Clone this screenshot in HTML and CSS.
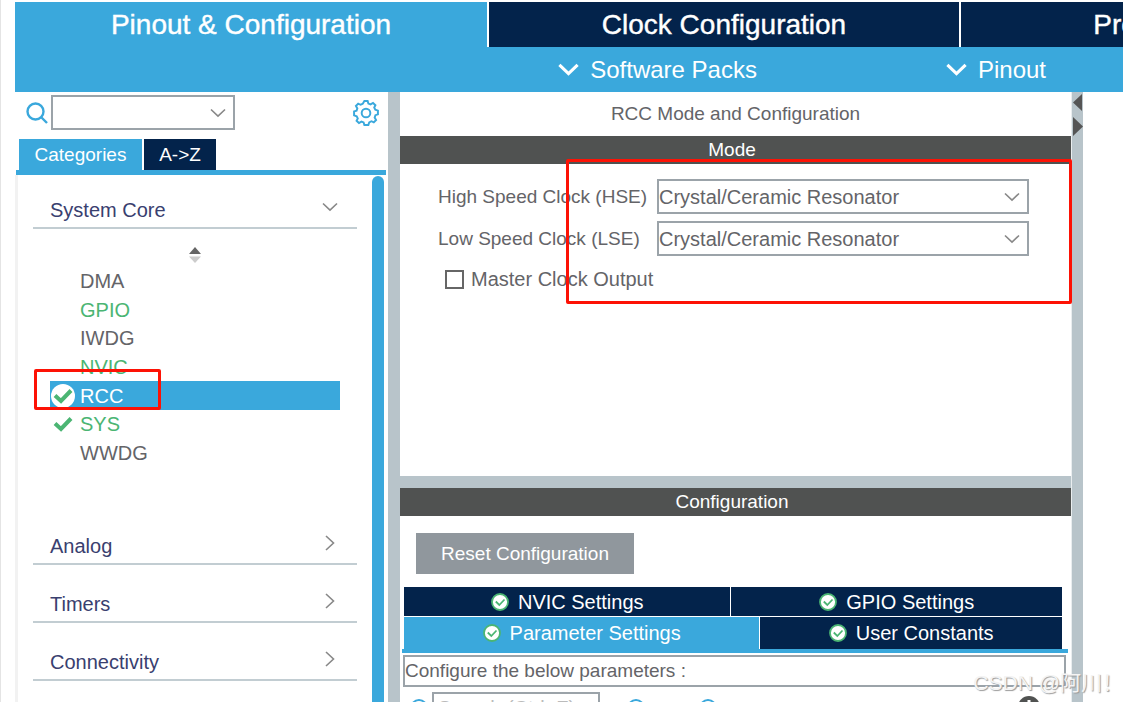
FILE: index.html
```
<!DOCTYPE html>
<html lang="en">
<head>
    <meta charset="UTF-8">
    <meta name="viewport" content="width=device-width, initial-scale=1.0">
    <title>RCC Mode and Configuration</title>
    <link rel="stylesheet" href="styles.css">
</head>
<body>

<!-- Shared icons -->
<svg class="defs" width="0" height="0" aria-hidden="true">
    <symbol id="down" viewBox="0 0 16 10"><path d="M1 1.500L8 8.200L15 1.500"/></symbol>
    <symbol id="right" viewBox="0 0 10 16"><path d="M1 1L8.500 8L1 15"/></symbol>
    <symbol id="tick" viewBox="0 0 20 16"><path d="M2 7.500L8 13L18 2.500"/></symbol>
    <symbol id="badge" viewBox="0 0 18 18">
        <circle cx="9" cy="9" r="8" fill="#fff" stroke="#4bb573" stroke-width="1.800"/>
        <path d="M4.800 8.500L8.300 12L13.500 6.500" fill="none" stroke="#4bb573" stroke-width="1.800"/>
    </symbol>
</svg>

<div class="app">
    <header>
        <nav class="main-tabs">
            <button class="active">Pinout &amp; Configuration</button>
            <button>Clock Configuration</button>
            <button>Project Manager</button>
        </nav>
        <div class="menu-bar">
            <button><svg class="menu-arrow"><use href="#down"/></svg>Software Packs</button>
            <button><svg class="menu-arrow"><use href="#down"/></svg>Pinout</button>
        </div>
    </header>

    <div class="workspace">
        <!-- Peripheral tree -->
        <aside class="sidebar">
            <div class="search-row">
                <svg class="search-icon" viewBox="0 0 22 22"><circle cx="9.500" cy="9.500" r="8"/><path d="M15 15L21 21"/></svg>
                <div class="combo">
                    <select aria-label="Search"><option></option></select>
                    <svg class="arrow"><use href="#down"/></svg>
                </div>
                <button class="gear" aria-label="Settings">
                    <svg viewBox="-12 -12 24 24">
                        <path d="M-1.500 -11H1.500L2.200 -8.700L4.200 -8L6.500 -9.300L8.700 -7.200L7.600 -5L8.600 -3L11 -2.200V1.200L8.700 2L8 4.200L9.300 6.500L7.200 8.700L5 7.600L3 8.600L2.200 11H-1.500L-2.200 8.700L-4.200 8L-6.500 9.300L-8.700 7.200L-7.600 5L-8.600 3L-11 2.200V-1.500L-8.700 -2.200L-8 -4.200L-9.300 -6.500L-7.200 -8.700L-5 -7.600L-3 -8.600Z"/>
                        <circle r="4"/>
                    </svg>
                </button>
            </div>
            <div class="side-tabs">
                <button class="active">Categories</button>
                <button>A-&gt;Z</button>
            </div>
            <div class="tree">
                <div class="tree-body">
                    <button class="group">System Core<svg class="arrow"><use href="#down"/></svg></button>
                    <svg class="sorter" viewBox="0 0 12 16"><path d="M0 7L6 0L12 7Z" fill="#666"/><path d="M0 9.500L6 16L12 9.500Z" fill="#ccc"/></svg>
                    <ul>
                        <li>DMA</li>
                        <li class="on">GPIO</li>
                        <li>IWDG</li>
                        <li class="on">NVIC</li>
                        <li class="selected"><span class="mark"><svg><use href="#tick"/></svg></span>RCC</li>
                        <li class="on"><span class="mark"><svg><use href="#tick"/></svg></span>SYS</li>
                        <li>WWDG</li>
                    </ul>
                    <button class="group">Analog<svg class="arrow-right"><use href="#right"/></svg></button>
                    <button class="group">Timers<svg class="arrow-right"><use href="#right"/></svg></button>
                    <button class="group">Connectivity<svg class="arrow-right"><use href="#right"/></svg></button>
                    <div class="highlight highlight-rcc"></div>
                </div>
                <div class="scrollbar"></div>
            </div>
        </aside>

        <div class="splitter"></div>

        <main>
            <h1>RCC Mode and Configuration</h1>
            <section class="mode">
                <h2>Mode</h2>
                <div class="field">
                    <label for="hse">High Speed Clock (HSE)</label>
                    <div class="combo">
                        <select id="hse"><option>Crystal/Ceramic Resonator</option></select>
                        <svg class="arrow"><use href="#down"/></svg>
                    </div>
                </div>
                <div class="field">
                    <label for="lse">Low Speed Clock (LSE)</label>
                    <div class="combo">
                        <select id="lse"><option>Crystal/Ceramic Resonator</option></select>
                        <svg class="arrow"><use href="#down"/></svg>
                    </div>
                </div>
                <label class="check"><input type="checkbox">Master Clock Output</label>
                <div class="highlight highlight-clocks"></div>
            </section>

            <section class="config">
                <h2>Configuration</h2>
                <button class="reset">Reset Configuration</button>
                <div class="config-tabs">
                    <div class="tab-row">
                        <button><svg class="badge"><use href="#badge"/></svg>NVIC Settings</button>
                        <button><svg class="badge"><use href="#badge"/></svg>GPIO Settings</button>
                    </div>
                    <div class="tab-row wide-first">
                        <button class="active"><svg class="badge"><use href="#badge"/></svg>Parameter Settings</button>
                        <button><svg class="badge"><use href="#badge"/></svg>User Constants</button>
                    </div>
                </div>
                <div class="params">
                    <p>Configure the below parameters :</p>
                    <div class="filter">
                        <svg class="ring" viewBox="0 0 20 20"><circle cx="10" cy="10" r="8"/></svg>
                        <input type="text" placeholder="Search (Ctrl+F)" aria-label="Search parameters">
                        <svg class="ring" viewBox="0 0 20 20"><circle cx="10" cy="10" r="8"/></svg>
                        <svg class="ring" viewBox="0 0 20 20"><circle cx="10" cy="10" r="8"/></svg>
                        <svg class="info" viewBox="0 0 22 22"><circle cx="11" cy="11" r="11" fill="#505251"/><path d="M11 4V7M11 9V17" stroke="#fff" stroke-width="3"/></svg>
                    </div>
                </div>
            </section>
        </main>

        <div class="splitter right">
            <svg viewBox="0 0 11 44"><path d="M10 2V19L1 10.500ZM1 25V44L11 34.500Z" fill="#555"/></svg>
        </div>
        <div class="canvas"></div>
    </div>
    <div class="watermark">CSDN @阿川！</div>
</div>

</body>
</html>
```
FILE: styles.css
```
/* General styles */
* {
    box-sizing: border-box;
}

body {
    margin: 0;
    background-color: #fff;
    color: #646468;
    font-family: "Liberation Sans", Arial, "Noto Sans CJK SC", sans-serif;
    font-size: 20px;
    line-height: 28px;
    overflow: hidden;
}

button, select, input {
    font: inherit;
    color: inherit;
    border: 0;
    border-radius: 0;
    padding: 0;
    margin: 0;
    background: none;
}

.defs {
    position: absolute;
}

.app {
    position: relative;
    display: flex;
    flex-direction: column;
    height: 100vh;
    padding: 2px 0 0 14px;
    border-left: 1px solid #e4e4e4;
    overflow: hidden;
}

/* Header */
.main-tabs {
    display: grid;
    grid-template-columns: repeat(3, 42.6%);
    background-color: #fff;
}

.main-tabs button {
    height: 45px;
    background-color: #03234b;
    border-left: 2px solid #fff;
    color: #fff;
    font-size: 28px;
    -webkit-text-stroke: 0.4px #fff;
}

.main-tabs .active {
    background-color: #3aa8dc;
    border-left: 0;
}

.menu-bar {
    display: flex;
    justify-content: flex-end;
    gap: 189px;
    height: 45px;
    padding-right: 77px;
    background-color: #3aa8dc;
}

.menu-bar button {
    display: flex;
    align-items: center;
    gap: 11px;
    color: #fff;
    font-size: 24px;
}

.menu-arrow {
    width: 21px;
    height: 13px;
    fill: none;
    stroke: #fff;
    stroke-width: 2.4px;
}

/* Panels */
.workspace {
    flex: 1;
    display: grid;
    grid-template-columns: 373fr 12px 672fr 11px 40fr;
    min-height: 0;
}

.splitter {
    background-color: #b8c4ca;
}

.splitter.right svg {
    display: block;
    width: 11px;
    height: 44px;
}

.arrow, .arrow-right {
    width: 16px;
    height: 10px;
    fill: none;
    stroke: #888;
    stroke-width: 1.6px;
}

.arrow-right {
    width: 10px;
    height: 16px;
}

.combo {
    position: relative;
    height: 35px;
    border: 2px solid #9ba3a9;
}

.combo select {
    width: 100%;
    height: 100%;
    appearance: none;
}

.combo .arrow {
    position: absolute;
    right: 7px;
    top: 11px;
    pointer-events: none;
}

/* Sidebar */
.sidebar {
    display: flex;
    flex-direction: column;
    min-height: 0;
}

.search-row {
    display: flex;
    align-items: center;
    height: 47px;
    padding: 0 9px 6px 11px;
}

.search-row .combo {
    width: 184px;
    margin-left: 3px;
}

.search-icon {
    width: 22px;
    height: 22px;
    fill: none;
    stroke: #3aa8dc;
    stroke-width: 2.4px;
}

.gear {
    display: flex;
    margin-left: auto;
}

.gear svg {
    width: 26px;
    height: 26px;
    fill: none;
    stroke: #3aa8dc;
    stroke-width: 1.8px;
}

.side-tabs {
    display: flex;
    gap: 2px;
    margin: 0 2px 0 1px;
    padding-left: 3px;
    border-bottom: 5px solid #3aa8dc;
    color: #fff;
}

.side-tabs button {
    width: 72px;
    height: 31px;
    background-color: #03234b;
    font-size: 19px;
}

.side-tabs .active {
    width: 123px;
    background-color: #3aa8dc;
}

.tree {
    flex: 1;
    display: flex;
    min-height: 0;
    padding-right: 4px;
    border-left: 3px solid #f2f2f2;
}

.tree-body {
    position: relative;
    flex: 1;
    padding: 0 15px;
    overflow: hidden;
}

.scrollbar {
    width: 12px;
    margin-top: 1px;
    border-radius: 6px 6px 0 0;
    background-color: #3aa8dc;
}

.group {
    display: flex;
    align-items: flex-end;
    justify-content: space-between;
    width: 100%;
    height: 58px;
    padding: 0 22px 3px 17px;
    border-bottom: 2px solid #c2cdd2;
    color: #39406f;
    text-align: left;
}

.group:first-child {
    height: 54px;
    padding-right: 19px;
}

.group .arrow {
    margin-bottom: 12px;
}

.group .arrow-right {
    margin-bottom: 9px;
}

.sorter {
    display: block;
    width: 12px;
    height: 16px;
    margin: 18px auto 4px;
}

.tree ul {
    display: grid;
    grid-template-rows: repeat(7, 1fr);
    height: 200px;
    margin: 0 17px 40px 17px;
    padding: 0;
    list-style: none;
}

.tree li {
    display: flex;
    align-items: center;
    padding-left: 30px;
}

.tree .on {
    color: #4bb573;
}

.tree .selected {
    background-color: #3aa8dc;
    color: #fff;
}

.mark {
    display: flex;
    align-items: center;
    justify-content: center;
    width: 24px;
    height: 24px;
    margin-left: -29px;
    margin-right: 5px;
    border-radius: 50%;
    background-color: #fff;
}

.mark svg {
    width: 20px;
    height: 16px;
    fill: none;
    stroke: #4bb573;
    stroke-width: 4px;
}

/* Red marker frames */
.highlight {
    position: absolute;
    border: 3px solid #fd1205;
    border-radius: 2px;
    pointer-events: none;
}

.highlight-rcc {
    left: 16px;
    top: 194px;
    width: 127px;
    height: 41px;
}

.highlight-clocks {
    left: 24.7%;
    right: -1px;
    top: 23px;
    height: 145px;
}

/* Mode and configuration */
main {
    display: flex;
    flex-direction: column;
    min-width: 0;
    min-height: 0;
    border-right: 1px solid #e9edef;
}

h1, h2 {
    margin: 0;
    font-size: 19px;
    font-weight: normal;
    text-align: center;
}

h1 {
    height: 44px;
    line-height: 44px;
}

h2 {
    padding-right: 7px;
    background-color: #505251;
    color: #fff;
}

.mode {
    position: relative;
    flex: none;
    height: 340px;
}

.mode h2 {
    margin-bottom: 15px;
}

.field {
    display: flex;
    align-items: center;
    margin: 0 42px 7px 38px;
}

.field label {
    width: 219px;
    font-size: 19px;
    white-space: nowrap;
}

.field .combo {
    flex: 1;
}

.check {
    display: flex;
    align-items: center;
    gap: 7px;
    width: max-content;
    margin: 9px 0 0 45px;
}

.check input {
    appearance: none;
    width: 19px;
    height: 19px;
    border: 2px solid #666;
}

.config {
    flex: 1;
    min-height: 0;
    border-top: 12px solid #b8c4ca;
}

.reset {
    display: block;
    width: 218px;
    height: 41px;
    margin: 17px 0 13px 16px;
    background-color: #90979d;
    color: #fff;
    font-size: 19px;
}

.config-tabs {
    padding: 0 9px 0 4px;
}

.tab-row {
    display: grid;
    grid-template-columns: 326fr 330fr;
    gap: 1px;
    margin-bottom: 1px;
}

.tab-row.wide-first {
    grid-template-columns: 54% 1fr;
    margin: 0;
}

.tab-row button {
    display: flex;
    align-items: center;
    justify-content: center;
    gap: 9px;
    height: 29px;
    background-color: #03234b;
    color: #fff;
}

.wide-first button {
    height: 32px;
}

.tab-row .active {
    background-color: #3aa8dc;
}

.badge {
    width: 18px;
    height: 18px;
}

.params {
    margin: 0 3px 0 2px;
    border-top: 4px solid #3aa8dc;
}

.params p {
    margin: 2px 2px 0 1px;
    border: 2px solid #9ba3a9;
    font-size: 19px;
}

.filter {
    display: flex;
    align-items: flex-start;
    padding: 5px 28px 0 7px;
}

.filter input {
    width: 168px;
    height: 32px;
    margin: 0 26px 0 3px;
    padding-left: 4px;
    border: 2px solid #9ba3a9;
}

.filter input::placeholder {
    color: #bbb;
    opacity: 1;
}

.ring {
    flex: none;
    width: 20px;
    height: 20px;
    margin-top: 6px;
    fill: none;
    stroke: #3aa8dc;
    stroke-width: 2px;
}

.ring + .ring {
    margin-left: 52px;
}

.info {
    width: 22px;
    height: 22px;
    margin: 4px 0 0 auto;
}

.watermark {
    position: absolute;
    right: 0;
    bottom: 5px;
    color: #f4f4f4;
    font-size: 21px;
    text-shadow: 1px 1px 1px #999;
}
```
